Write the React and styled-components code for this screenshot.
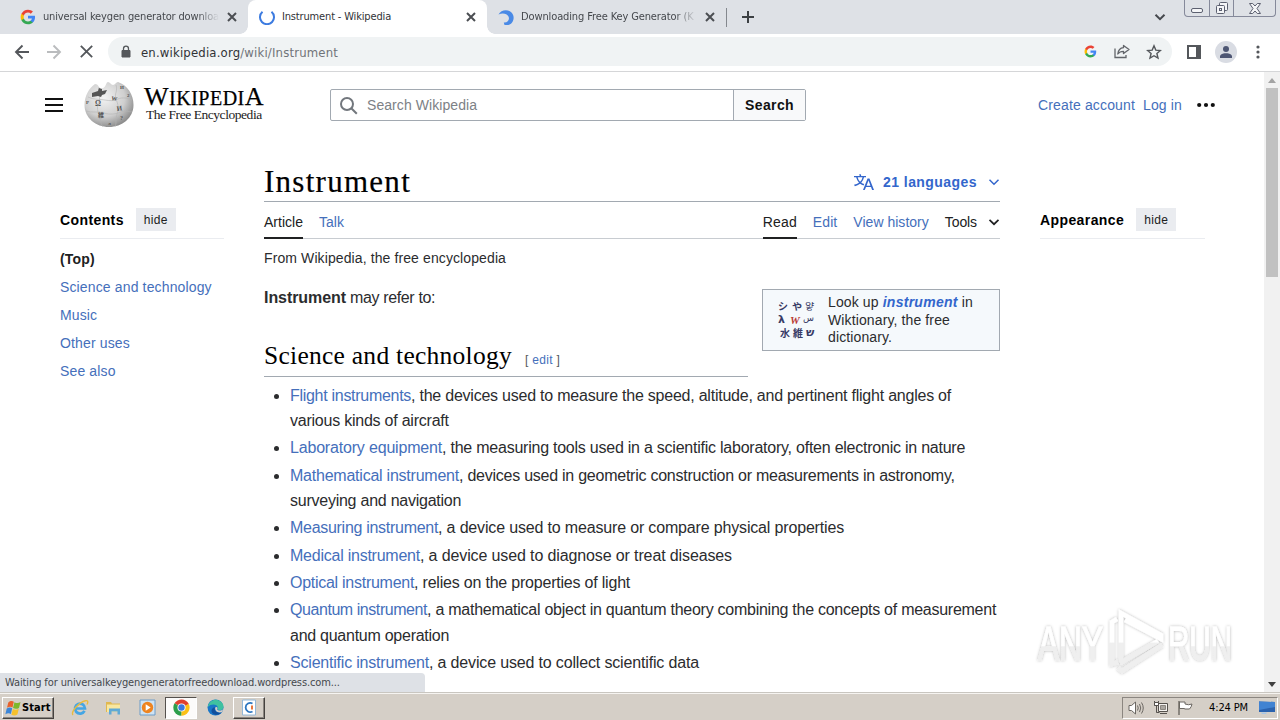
import React from 'react';
import styled, { createGlobalStyle, css } from 'styled-components';

const sans = "'Liberation Sans', Arial, sans-serif";
const serif = "'Liberation Serif', Georgia, serif";
const ui = "'DejaVu Sans Condensed', 'DejaVu Sans', Tahoma, sans-serif";

const GlobalStyle = createGlobalStyle`
  * {
    box-sizing: border-box;
  }
  body {
    margin: 0;
    background: #fff;
    overflow: hidden;
  }
  svg {
    display: block;
    flex: none;
  }
`;

const Desktop = styled.div`
  display: flex;
  flex-direction: column;
  width: 1280px;
  height: 720px;
  overflow: hidden;
  font-family: ${sans};
  color: #2b2c2e;
`;

/* browser chrome */

const TabStrip = styled.div`
  display: flex;
  align-items: center;
  height: 34px;
  background: #dee1e6;
`;

const Tab = styled.div`
  position: relative;
  display: flex;
  align-items: center;
  flex: none;
  width: ${({ $width }) => $width}px;
  height: 34px;
  padding-left: ${({ $pad }) => $pad}px;
  ${({ $active }) =>
    $active &&
    css`
      background: #fff;
      border-radius: 8px 8px 0 0;
      &::before,
      &::after {
        content: '';
        position: absolute;
        bottom: 0;
        width: 8px;
        height: 8px;
      }
      &::before {
        left: -8px;
        background: radial-gradient(circle at 0 0, transparent 7.5px, #fff 8px);
      }
      &::after {
        right: -8px;
        background: radial-gradient(circle at 100% 0, transparent 7.5px, #fff 8px);
      }
    `}
`;

const TabLabel = styled.span`
  flex: none;
  width: 176px;
  margin: 0 7px 0 ${({ $gap }) => $gap}px;
  overflow: hidden;
  white-space: pre;
  font: 11px/16px ${ui};
  letter-spacing: ${({ $ls }) => $ls}px;
  color: ${({ $active }) => ($active ? '#303236' : '#45484d')};
  ${({ $fade }) =>
    $fade && 'mask-image: linear-gradient(90deg, #000 154px, transparent 176px);'}
`;

const TabDivider = styled.div`
  width: 1px;
  height: 19px;
  background: #84888e;
`;

const NewTab = styled.div`
  margin-left: 15px;
`;

const TabSearch = styled.div`
  margin-left: auto;
  margin-right: 18px;
`;

const WindowButtons = styled.div`
  display: flex;
  align-self: flex-start;
  width: 92px;
  height: 17px;
  margin-right: 4px;
  border: 1px solid #85899a;
  border-top: 0;
  border-radius: 0 0 4px 4px;
`;

const WindowButton = styled.div`
  display: flex;
  justify-content: center;
  align-items: center;
  width: ${({ $width }) => $width}px;
  & + & {
    border-left: 1px solid #85899a;
  }
`;

const Toolbar = styled.div`
  display: flex;
  align-items: center;
  height: 38px;
  padding: 0 6px 2px;
  background: #fff;
  border-bottom: 1px solid #d5d6d8;
`;

const IconSlot = styled.div`
  display: flex;
  justify-content: center;
  align-items: center;
  width: 32px;
  height: 29px;
`;

const Omnibox = styled.div`
  display: flex;
  align-items: center;
  width: 1064px;
  height: 29px;
  margin: 0 6px;
  padding: 0 2px 0 12px;
  border-radius: 15px;
  background: #f0f3f4;
`;

const Url = styled.div`
  flex: 1;
  margin-left: 9px;
  padding-top: 2px;
  font: 13px/20px ${ui};
  letter-spacing: 0.17px;
  color: #707479;
  b {
    font-weight: 400;
    color: #303236;
  }
`;

const Avatar = styled.div`
  display: flex;
  justify-content: center;
  align-items: center;
  width: 22px;
  height: 22px;
  border-radius: 50%;
  background: #d9dce3;
`;

/* page */

const Viewport = styled.div`
  position: relative;
  display: flex;
  height: 620px;
  overflow: hidden;
`;

const Page = styled.div`
  width: 1264px;
  height: 620px;
  overflow: hidden;
`;

const Header = styled.header`
  display: flex;
  align-items: center;
  height: 66px;
  padding-left: 45px;
`;

const Burger = styled.div`
  width: 18px;
  height: 14px;
  margin-right: 21px;
  border-top: 2px solid #111;
  border-bottom: 2px solid #111;
  display: flex;
  align-items: center;
  &::after {
    content: '';
    width: 18px;
    height: 2px;
    background: #111;
  }
`;

const Wordmark = styled.div`
  width: 120px;
  height: 42px;
  margin: 0 66px 0 10px;
  color: #000;
  font-family: ${serif};
  white-space: nowrap;
`;

const Brand = styled.div`
  height: 22px;
  font-size: 26px;
  line-height: 25px;
  letter-spacing: 0.5px;
  -webkit-text-stroke: 0.25px #000;
  span {
    font-size: 20px;
  }
`;

const Motto = styled.div`
  margin-left: 2px;
  font-size: 13.5px;
  line-height: 18px;
  letter-spacing: -0.45px;
  color: #222;
`;

const SearchForm = styled.div`
  display: flex;
  width: 476px;
  height: 32px;
  border: 1px solid #a2a9b1;
  border-radius: 2px;
`;

const SearchField = styled.div`
  display: flex;
  align-items: center;
  gap: 8px;
  width: 403px;
  padding: 0 0 1px 8px;
  border-right: 1px solid #a2a9b1;
  font-size: 14px;
  letter-spacing: 0.07px;
  color: #7d8186;
`;

const SearchButton = styled.div`
  flex: 1;
  background: #f8f9fa;
  text-align: center;
  font: bold 14px/30px ${sans};
  letter-spacing: 0.38px;
  color: #111;
`;

const UserLinks = styled.div`
  display: flex;
  align-items: center;
  margin-left: 232px;
  font-size: 14px;
  letter-spacing: 0.145px;
  a + a {
    margin-left: 8px;
  }
  svg {
    margin-left: 15px;
  }
`;

const Link = styled.a`
  color: #456fbb;
  letter-spacing: ${({ $ls }) => ($ls === undefined ? 'inherit' : `${$ls}px`)};
`;

const Columns = styled.div`
  display: grid;
  grid-template-columns: 164px 736px 165px;
  column-gap: 40px;
  padding-left: 60px;
`;

const Sidebar = styled.aside`
  padding-top: 64px;
`;

const SidebarHead = styled.div`
  display: flex;
  align-items: center;
  gap: 12px;
  height: 37px;
  padding-bottom: 1px;
  border-bottom: 1px solid #eaecf0;
  font-weight: bold;
  font-size: 14px;
  letter-spacing: 0.4px;
  color: #000;
`;

const HideButton = styled.span`
  width: 40px;
  height: 23px;
  background: #eaecf0;
  text-align: center;
  font: 12px/24px ${sans};
  letter-spacing: 0.33px;
  color: #202122;
`;

const Toc = styled.div`
  padding-top: 6px;
  font-size: 14px;
  line-height: 28px;
`;

const TocItem = styled.div`
  font-weight: ${({ $top }) => ($top ? 'bold' : 'normal')};
  color: ${({ $top }) => ($top ? '#202122' : '#456fbb')};
  letter-spacing: ${({ $top }) => ($top ? 0.21 : 0.14)}px;
`;

const TitleRow = styled.div`
  display: flex;
  justify-content: space-between;
  align-items: center;
  height: 64px;
  padding-top: 24px;
  border-bottom: 1px solid #a2a9b1;
`;

const Title = styled.h1`
  margin: 0;
  font: 31px/36px ${serif};
  letter-spacing: 1.27px;
  color: #000;
  -webkit-text-stroke: 0.2px #000;
`;

const Languages = styled.div`
  display: flex;
  align-items: center;
  font-weight: bold;
  font-size: 14px;
  letter-spacing: 0.44px;
  color: #3366cc;
  span {
    margin: 0 11px 0 9px;
  }
`;

const PageTabs = styled.nav`
  display: flex;
  height: 37px;
  border-bottom: 1px solid #c8ccd1;
  font-size: 14px;
  line-height: 40px;
`;

const PageTab = styled.div`
  height: 37px;
  margin-right: ${({ $gap = 16 }) => $gap}px;
  letter-spacing: ${({ $ls = 0.05 }) => $ls}px;
  color: ${({ $plain }) => ($plain ? '#202122' : '#456fbb')};
  ${({ $selected }) => $selected && 'box-shadow: inset 0 -2px #202122;'}
`;

const Spacer = styled.div`
  flex: 1;
`;

const ToolsArrow = styled.div`
  display: flex;
  align-items: center;
  height: 40px;
`;

const Tagline = styled.div`
  padding-top: 9px;
  font-size: 14px;
  line-height: 20px;
  letter-spacing: 0.105px;
`;

const Article = styled.div`
  padding-top: 17px;
  font-size: 16px;
  line-height: 25.6px;
`;

const SisterBox = styled.div`
  float: right;
  display: flex;
  align-items: center;
  width: 238px;
  height: 62px;
  margin: 4px 0 8px 14px;
  padding-left: 13px;
  border: 1px solid #a2a9b1;
  background: #f5f9fc;
  font-size: 14px;
  line-height: 17.5px;
  letter-spacing: 0.12px;
  p {
    width: 160px;
    margin: 1px 0 0 10px;
  }
  i {
    font-weight: bold;
    letter-spacing: 0.27px;
    color: #3366cc;
  }
`;

const Lead = styled.p`
  margin: 0;
  letter-spacing: -0.37px;
  b {
    letter-spacing: -0.07px;
  }
`;

const SectionHead = styled.h2`
  display: flex;
  align-items: baseline;
  margin: 28px 0 0;
  height: 38px;
  border-bottom: 1px solid #a2a9b1;
  font: 25.5px/33px ${serif};
  letter-spacing: 0.265px;
  color: #000;
`;

const EditSection = styled.span`
  margin-left: 13px;
  font: 12px/20px ${sans};
  letter-spacing: 0.29px;
  color: #54595d;
`;

const List = styled.ul`
  margin: 6px 0 0;
  padding: 0 0 0 26px;
`;

const ListItem = styled.li`
  margin-bottom: 1.6px;
  letter-spacing: ${({ $ls }) => $ls}px;
`;

const Scrollbar = styled.div`
  display: flex;
  flex-direction: column;
  align-items: center;
  width: 16px;
  background: #f1f1f1;
`;

const Thumb = styled.div`
  width: 12px;
  height: 189px;
  margin-bottom: auto;
  background: #c1c1c1;
`;

const ArrowCell = styled.div`
  display: flex;
  align-items: center;
  justify-content: center;
  height: 16px;
`;

const StatusBubble = styled.div`
  position: absolute;
  left: 0;
  bottom: 0;
  width: 425px;
  height: 19px;
  padding-left: 5px;
  border-radius: 0 4px 0 0;
  background: #dee1e6;
  font: 11px/20px ${ui};
  letter-spacing: -0.11px;
  color: #45484d;
`;

const Watermark = styled.svg`
  position: absolute;
  left: 1030px;
  top: 528px;
  text {
    font: 49px 'Liberation Sans Narrow', ${sans};
  }
`;

/* taskbar */

const Taskbar = styled.div`
  display: flex;
  align-items: center;
  height: 28px;
  padding: 2px 2px 0;
  background: #d5cfc7;
  border-top: 1px solid #c9c6c0;
  box-shadow: inset 0 1px #f6f4f1;
`;

const raised = css`
  border: 1px solid;
  border-color: #fff #45423f #45423f #fff;
  box-shadow: inset -1px -1px #8b8680;
`;

const sunken = css`
  border: 1px solid;
  border-color: #55514d #fff #fff #55514d;
  background: #fcfbfa;
`;

const StartButton = styled.div`
  display: flex;
  align-items: center;
  gap: 1px;
  width: 52px;
  height: 22px;
  padding-left: 2px;
  margin-right: 10px;
  font: bold 11px/18px ${ui};
  letter-spacing: 0.1px;
  color: #000;
  ${raised}
`;

const TaskItem = styled.div`
  display: flex;
  justify-content: center;
  align-items: center;
  width: 32px;
  height: 22px;
  margin-right: 1.8px;
  ${({ $open }) => $open && raised}
  ${({ $current }) => $current && sunken}
`;

const Tray = styled.div`
  display: flex;
  align-items: center;
  gap: 8px;
  width: 156px;
  height: 22px;
  margin-left: auto;
  padding-left: 5px;
  border: 1px solid;
  border-color: #8b8680 #fff #fff #8b8680;
`;

const Clock = styled.span`
  margin: 0 3px 0 7px;
  font: 11px/20px ${ui};
  letter-spacing: -0.12px;
  color: #000;
  white-space: nowrap;
`;

/* drawings */

const GoogleIcon = ({ size }) => (
  <svg width={size} height={size} viewBox="0 0 24 24">
    <path fill="#4285f4" d="M22.56 12.25c0-.78-.07-1.53-.2-2.25H12v4.26h5.92c-.26 1.37-1.04 2.53-2.21 3.31v2.77h3.57c2.08-1.92 3.28-4.74 3.28-8.09z" />
    <path fill="#34a853" d="M12 23c2.97 0 5.46-.98 7.28-2.66l-3.57-2.77c-.98.66-2.23 1.06-3.71 1.06-2.86 0-5.29-1.93-6.16-4.53H2.18v2.84C3.99 20.53 7.7 23 12 23z" />
    <path fill="#fbbc05" d="M5.84 14.09c-.22-.66-.35-1.36-.35-2.09s.13-1.43.35-2.09V7.07H2.18C1.43 8.55 1 10.22 1 12s.43 3.45 1.18 4.93l3.66-2.84z" />
    <path fill="#ea4335" d="M12 5.38c1.62 0 3.06.56 4.21 1.64l3.15-3.15C17.45 2.09 14.97 1 12 1 7.7 1 3.99 3.47 2.18 7.07l3.66 2.84c.87-2.6 3.3-4.53 6.16-4.53z" />
  </svg>
);

const CloseIcon = ({ size = 12, color = '#4b4e52', width = 2 }) => (
  <svg width={size} height={size} viewBox="0 0 12 12">
    <path d="M2 2l8 8M10 2l-8 8" stroke={color} strokeWidth={width} fill="none" />
  </svg>
);

const Chevron = ({ size = 12, color = '#45484d', width = 2 }) => (
  <svg width={size} height={size} viewBox="0 0 12 12">
    <path d="M1.500 3.800L6 8.200l4.500-4.400" stroke={color} strokeWidth={width} fill="none" />
  </svg>
);

const ArrowIcon = ({ color, flip }) => (
  <svg width="16" height="16" viewBox="0 0 16 16">
    <path
      d="M15 8H2.500M8.500 1.500L2 8l6.500 6.500"
      transform={flip ? 'rotate(180 8 8)' : undefined}
      stroke={color}
      strokeWidth="1.9"
      fill="none"
    />
  </svg>
);

const Globe = () => (
  <svg width="50" height="50" viewBox="0 0 50 50">
    <defs>
      <radialGradient id="globe" cx="0.4" cy="0.35" r="0.7">
        <stop offset="0" stopColor="#f3f3f3" />
        <stop offset="0.6" stopColor="#cfcfcf" />
        <stop offset="1" stopColor="#858585" />
      </radialGradient>
    </defs>
    <path
      d="M11 4c-6 4-10.500 12-10.500 21C.5 38 12 47 25 47s24.500-9 24.500-22C49.500 14 43 5 34 2c-2 0-3 3-5 3s-3-3-5-3-2 5-5 6-3 1-4-1-2-3-4-3z"
      fill="url(#globe)"
    />
    <path
      d="M4 17c6 3 12 2 17 3s9 1 13-1 10-1 14 1M2 31c6 2 12 0 18 2s12 1 17-1 8 0 11 0M15 7c-2 6 2 9 0 14s-2 9 0 14 1 8 4 12M32 5c2 6-2 9 0 14s3 9 1 15 0 9-2 13"
      stroke="#b4b4b4"
      strokeWidth="0.600"
      fill="none"
    />
    <path d="M8 13l6-2 1-3 3 1 0 2 5-1-2 4-3 1-1 2-3-1-6 1z" fill="#555" />
    <g fill="#555" fontFamily="Liberation Serif, serif" fontWeight="bold">
      <text x="11" y="26" fontSize="7.500">Ω</text>
      <text x="27" y="20" fontSize="6" transform="rotate(10 27 20)">W</text>
      <text x="33" y="31" fontSize="7" transform="rotate(-8 33 31)">И</text>
      <text x="14" y="37" fontSize="6" fontFamily="Noto Sans CJK JP">維</text>
      <text x="2" y="24" fontSize="5">Р</text>
      <text x="43" y="17" fontSize="5">2</text>
      <text x="36" y="40" fontSize="6">?</text>
      <text x="24" y="45" fontSize="5">л</text>
      <text x="36" y="9" fontSize="5">И</text>
    </g>
  </svg>
);

const WiktionaryLogo = () => (
  <svg width="42" height="44" viewBox="0 0 42 44">
    <g
      fill="#383c66"
      fontFamily="Noto Sans CJK JP, Liberation Serif, DejaVu Sans, serif"
      fontSize="10"
      fontWeight="bold"
    >
      <text x="2" y="12">シ</text>
      <text x="16" y="12" transform="rotate(8 20 8)">や</text>
      <text x="29" y="12" fontFamily="Noto Sans CJK KR" fontWeight="400" transform="rotate(6 34 8)">얗</text>
      <text x="2" y="25" fontSize="11" fontFamily="DejaVu Sans">λ</text>
      <text x="14" y="26" fontSize="11" fill="#b93a34" fontFamily="Liberation Serif" fontStyle="italic">W</text>
      <text x="27" y="23" fontSize="9" fontFamily="DejaVu Sans" fontWeight="400">س</text>
      <text x="4" y="39">水</text>
      <text x="17" y="39">維</text>
      <text x="30" y="38" fontSize="11" fontFamily="DejaVu Sans">ש</text>
    </g>
  </svg>
);

const LanguageIcon = () => (
  <svg width="20" height="20" viewBox="0 0 20 20" fill="#3366cc">
    <path d="M20 18h-1.440a.6.6 0 0 1-.4-.12.8.8 0 0 1-.23-.31L17 15h-5l-1 2.540a.8.8 0 0 1-.22.3.6.6 0 0 1-.4.14H9l4.550-11.470h1.890zm-3.530-4.310L14.890 9.500a12 12 0 0 1-.39-1.240q-.09.37-.19.69l-.19.56-1.580 4.190zm-6.300-1.580a13.400 13.400 0 0 1-2.910-1.410 11.460 11.460 0 0 0 2.810-5.370H12V4H7.310a4 4 0 0 0-.2-.56C6.870 2.790 6.600 2 6.600 2l-1.470.5s.4.89.6 1.500H0v1.330h2.150A11.230 11.230 0 0 0 5 10.700a17.200 17.200 0 0 1-5 2.100q.56.82.87 1.380a23.300 23.300 0 0 0 5.220-2.510 15.600 15.600 0 0 0 3.560 1.770zM3.630 5.330h4.910a8.100 8.100 0 0 1-2.450 4.450 9.100 9.100 0 0 1-2.460-4.450" />
  </svg>
);

const ChromeLogo = () => (
  <svg width="17" height="17" viewBox="0 0 18 18">
    <path d="M9 9L1.600 4.500A8.700 8.700 0 0 1 16.600 5z" fill="#e0402f" />
    <path d="M9 9l7.600-4A8.700 8.700 0 0 1 8.700 17.700z" fill="#fbc116" />
    <path d="M9 9l-.3 8.700A8.700 8.700 0 0 1 1.600 4.500z" fill="#2c9e4b" />
    <path d="M9 5h7.600L9 9z" fill="#e0402f" />
    <circle cx="9" cy="9" r="4.300" fill="#fff" />
    <circle cx="9" cy="9" r="3.400" fill="#3a78e0" />
  </svg>
);

const WindowsFlag = () => (
  <svg width="16" height="16" viewBox="0 0 16 16">
    <path d="M3.300 2.500c2-1.800 4-1.800 5.500-.8L7.500 7.500c-1.500-1-3.500-1-5.500.3z" fill="#e8622c" />
    <path d="M9.500 2.200c2 1.200 4 1.200 6-.2L14 7.900c-2 1.200-4 1.200-6 .2z" fill="#7db82c" />
    <path d="M1.700 8.600c2-1.300 4-1.300 5.500-.3L5.900 14c-1.500-1-3.500-1-5.500.3z" fill="#3c86d8" />
    <path d="M7.800 8.900c2 1 4 1 6-.2L12.400 14.500c-2 1.200-4 1.200-6 .2z" fill="#f6c12c" />
  </svg>
);

const IeIcon = () => (
  <svg width="18" height="18" viewBox="0 0 18 18">
    <path d="M13.500 11.800A5 5 0 1 1 14 9.500H5" stroke="#45a6e4" strokeWidth="2.700" fill="none" />
    <path d="M2 16C-.5 13 8 3 14.500 1.700c3-.5 2.500 2 1.500 3.800" stroke="#e8bb3f" strokeWidth="1.400" fill="none" />
  </svg>
);

const FolderIcon = () => (
  <svg width="17" height="17" viewBox="0 0 17 17">
    <path d="M1 3h5l1 1.500h8V13H1z" fill="#e0b850" />
    <path d="M2 5.500h13V13H2z" fill="#f8e7a0" />
    <path d="M4 15.500V9.500h11v6h-2.500v-3h-6v3z" fill="#5fa9d6" />
  </svg>
);

const MediaIcon = () => (
  <svg width="17" height="17" viewBox="0 0 17 17">
    <path d="M1 1h15v15H1z" fill="#cfe3f3" stroke="#6c9cc8" />
    <circle cx="8.500" cy="8.500" r="5.700" fill="#ee8420" />
    <path d="M6.700 5.300l5 3.200-5 3.200z" fill="#fff" />
  </svg>
);

const EdgeIcon = () => (
  <svg width="17" height="17" viewBox="0 0 17 17">
    <circle cx="8.500" cy="8.500" r="8" fill="#1976c8" />
    <path d="M.7 8C2 2 7 0 10.500 1s6 3.500 6 6.500-2.500 4-4.500 3.500c-2-.4-1-1.600-1.200-2.800C10.500 5 4 4 .7 8z" fill="#3fc1a0" />
    <path d="M7.800 8c-1 4 2.500 6.500 6.700 5.300-2 3-6.500 3.200-8.700 1.200C3.500 12.300 4.500 9 7.800 8z" fill="#124f9c" />
    <path d="M8.200 8.500c1-.9 2.200-.6 2.300.4 0 1-.8 1.300.2 2.100 1.600 1 4 .6 5.500-.8l-1 2.800c-4 1.500-7.500-.8-7-4.500z" fill="#d5cfc7" />
  </svg>
);

const CIcon = () => (
  <svg width="16" height="17" viewBox="0 0 16 17">
    <path d="M1.500 1h13v15h-13z" fill="#fff" stroke="#93b8d8" />
    <path d="M11.500 4.500A4.600 4.600 0 1 0 11.500 12.500" stroke="#2c76c0" strokeWidth="1.800" fill="none" />
    <path d="M10 6.500h2v4h-2z" fill="#e8743a" />
  </svg>
);

const VolumeIcon = () => (
  <svg width="17" height="16" viewBox="0 0 17 16" stroke="#6b6762" fill="none">
    <path d="M1 5.500h2.500L7.500 2v12l-4-3.500H1z" fill="#fff" />
    <path d="M9.500 5.500q1.500 2.500 0 5M11.500 4q2.500 4 0 8M13.500 2.500q3.500 5.500 0 11" />
  </svg>
);

const NetworkIcon = () => (
  <svg width="16" height="16" viewBox="0 0 16 16" stroke="#55514d">
    <path d="M5.500 3.500h9v8h-9z" fill="#f4f2ef" />
    <path d="M7.500 5.500h5v4h-5z" fill="#aaa6a0" stroke="#8b8680" />
    <path d="M7 13.500h7M1.500 1v4.500h4V1M3.500 5.500v7h3" fill="none" />
    <path d="M1.500 2.500h4v3h-4z" fill="#fff" />
  </svg>
);

const FlagIcon = () => (
  <svg width="17" height="16" viewBox="0 0 17 16" stroke="#6b6762">
    <path d="M2.500 2h5.500v2q3.500 1.500 7 0-.5 3-2.500 5h-5V8.500h-5z" fill="#fff" />
    <path d="M2 1v14" fill="none" strokeWidth="1.400" />
  </svg>
);

const MonitorIcon = () => (
  <svg width="16" height="15" viewBox="0 0 16 15">
    <path d="M0 1.500l16 .5v10H0z" fill="#2b62ae" />
    <path d="M0 1.500l16 .5v5L0 10z" fill="#4183d2" />
    <path d="M2 12.500h6l-1 1.500H3z" fill="#a8c6e6" />
  </svg>
);

const AnyRun = () => (
  <Watermark width="210" height="84" viewBox="0 0 210 84">
    <defs>
      <linearGradient id="half" x1="0" y1="0" x2="0" y2="1">
        <stop offset="0.55" stopColor="#fff" />
        <stop offset="0.57" stopColor="#efefef" />
      </linearGradient>
      <linearGradient id="halfPlay" gradientUnits="userSpaceOnUse" x1="0" y1="10" x2="0" y2="74">
        <stop offset="0.5" stopColor="#fff" />
        <stop offset="0.52" stopColor="#efefef" />
      </linearGradient>
      <filter id="shade" x="-10%" y="-20%" width="120%" height="140%">
        <feDropShadow dx="0" dy="0" stdDeviation="1.800" floodColor="#000" floodOpacity="0.3" />
      </filter>
    </defs>
    <g filter="url(#shade)" fill="url(#half)" stroke="url(#half)" strokeWidth="1">
      <text x="8" y="60" textLength="65" lengthAdjust="spacingAndGlyphs">ANY</text>
      <text x="138" y="60" textLength="64" lengthAdjust="spacingAndGlyphs">RUN</text>
    </g>
    <g filter="url(#shade)" fill="none" stroke="url(#halfPlay)" strokeWidth="4.500">
      <path d="M87 19l-5 3v42l6-2" />
      <path d="M91 62V13l40 22v4L95 20" />
      <path d="M90 63l38-22M88 68l4 3 40-26" />
    </g>
  </Watermark>
);

const toc = ['Science and technology', 'Music', 'Other uses', 'See also'];

const instruments = [
  { name: 'Flight instruments', ls: -0.29, textLs: -0.23, text: ', the devices used to measure the speed, altitude, and pertinent flight angles of various kinds of aircraft' },
  { name: 'Laboratory equipment', ls: -0.18, textLs: -0.237, text: ', the measuring tools used in a scientific laboratory, often electronic in nature' },
  { name: 'Mathematical instrument', ls: -0.23, textLs: -0.245, text: ', devices used in geometric construction or measurements in astronomy, surveying and navigation' },
  { name: 'Measuring instrument', ls: -0.29, textLs: -0.164, text: ', a device used to measure or compare physical properties' },
  { name: 'Medical instrument', ls: -0.24, textLs: -0.123, text: ', a device used to diagnose or treat diseases' },
  { name: 'Optical instrument', ls: -0.27, textLs: -0.207, text: ', relies on the properties of light' },
  { name: 'Quantum instrument', ls: -0.44, textLs: -0.261, text: ', a mathematical object in quantum theory combining the concepts of measurement and quantum operation' },
  { name: 'Scientific instrument', ls: -0.2, textLs: -0.157, text: ', a device used to collect scientific data' },
];

const BrowserTabs = () => (
  <TabStrip>
    <Tab $width={248} $pad={20}>
      <GoogleIcon size={16} />
      <TabLabel $gap={7} $ls={-0.15} $fade>universal keygen generator downloa</TabLabel>
      <CloseIcon />
    </Tab>
    <Tab $width={239} $pad={11} $active>
      <svg width="16" height="16" viewBox="0 0 16 16">
        <path d="M3.500 2.800A7 7 0 1 0 12.500 2.800" stroke="#3c7be0" strokeWidth="2" fill="none" />
      </svg>
      <TabLabel $gap={7} $ls={-0.16} $active>Instrument - Wikipedia</TabLabel>
      <CloseIcon />
    </Tab>
    <Tab $width={239} $pad={11}>
      <svg width="17" height="17" viewBox="0 0 17 17">
        <path d="M.5 5.500C3 .5 10 0 13.500 3.500c4 4 2 11-3 12.500H6.500l-.7-2.500C9.500 14 12 11 10.500 7.500 9 4.500 4.500 3.500.5 5.500z" fill="#4a8ae6" />
      </svg>
      <TabLabel $gap={6} $ls={-0.12} $fade>Downloading Free Key Generator (K</TabLabel>
      <CloseIcon />
    </Tab>
    <TabDivider />
    <NewTab>
      <svg width="12" height="12" viewBox="0 0 12 12">
        <path d="M6 0v12M0 6h12" stroke="#3c4043" strokeWidth="2" />
      </svg>
    </NewTab>
    <TabSearch>
      <Chevron size={12} />
    </TabSearch>
    <WindowButtons>
      <WindowButton $width={24}>
        <svg width="12" height="16" viewBox="0 0 12 16">
          <rect x="0.500" y="8.500" width="11" height="4" rx="1.500" fill="#f4f5f7" stroke="#5c6070" />
        </svg>
      </WindowButton>
      <WindowButton $width={25}>
        <svg width="14" height="15" viewBox="0 0 14 15" fill="#f4f5f7" stroke="#5c6070">
          <rect x="4.500" y="1.500" width="8" height="8" rx="1" />
          <rect x="1.500" y="4.500" width="8" height="8" rx="1" />
          <rect x="4.500" y="7.500" width="2" height="2" />
        </svg>
      </WindowButton>
      <WindowButton $width={42}>
        <svg width="12" height="11" viewBox="0 0 12 11">
          <path d="M.5.5h3.200L6 3 8.300.5h3.200L8 5.500l3.500 5H8.300L6 8l-2.300 2.500H.5L4 5.500z" fill="#f4f5f7" stroke="#5c6070" />
        </svg>
      </WindowButton>
    </WindowButtons>
  </TabStrip>
);

const BrowserToolbar = () => (
  <Toolbar>
    <IconSlot><ArrowIcon color="#54575b" /></IconSlot>
    <IconSlot><ArrowIcon color="#babcbe" flip /></IconSlot>
    <IconSlot><CloseIcon size={17} color="#54575b" width={1.3} /></IconSlot>
    <Omnibox>
      <svg width="12" height="14" viewBox="0 0 12 14">
        <path d="M2 5.500h8v6.500h-8z" fill="#54575b" stroke="#54575b" strokeLinejoin="round" />
        <path d="M3.500 6V3.700a2.500 2.500 0 0 1 5 0V6" stroke="#54575b" strokeWidth="1.300" fill="none" />
      </svg>
      <Url><b>en.wikipedia.org</b>/wiki/Instrument</Url>
      <IconSlot><GoogleIcon size={13} /></IconSlot>
      <IconSlot>
        <svg width="16" height="15" viewBox="0 0 16 15" stroke="#62656a" strokeWidth="1.300" fill="none">
          <path d="M1 4.500V13.500h11V11" />
          <path d="M9.500 1.500l5.500 4-5.500 4V7.300C6.500 7.300 5 8.300 3.800 10c.4-3.500 2.400-6 5.700-6.300z" strokeLinejoin="round" />
        </svg>
      </IconSlot>
      <IconSlot>
        <svg width="16" height="16" viewBox="0 0 16 16">
          <path d="M8 1.800l1.800 4.300 4.600.4-3.500 3 1.100 4.600L8 11.700l-4 2.400 1.100-4.600-3.500-3 4.600-.4z" stroke="#54575b" strokeWidth="1.400" fill="none" />
        </svg>
      </IconSlot>
    </Omnibox>
    <IconSlot>
      <svg width="14" height="14" viewBox="0 0 14 14">
        <path d="M1 1h12v12H1z" stroke="#54575b" strokeWidth="2" fill="none" />
        <path d="M9 1h4v12H9z" fill="#54575b" />
      </svg>
    </IconSlot>
    <IconSlot>
      <Avatar>
        <svg width="12" height="12" viewBox="0 0 12 12" fill="#4d5673">
          <circle cx="6" cy="3" r="3" />
          <path d="M0 12V9.800C1 7.800 4 7.300 6 7.300s5 .5 6 2.500V12z" />
        </svg>
      </Avatar>
    </IconSlot>
    <IconSlot>
      <svg width="4" height="14" viewBox="0 0 4 14" fill="#54575b">
        <circle cx="2" cy="2" r="1.600" />
        <circle cx="2" cy="7" r="1.600" />
        <circle cx="2" cy="12" r="1.600" />
      </svg>
    </IconSlot>
  </Toolbar>
);

const WikiHeader = () => (
  <Header>
    <Burger />
    <Globe />
    <Wordmark>
      <Brand>W<span>IKIPEDI</span>A</Brand>
      <Motto>The Free Encyclopedia</Motto>
    </Wordmark>
    <SearchForm>
      <SearchField>
        <svg width="20" height="20" viewBox="0 0 20 20" stroke="#72777d" strokeWidth="2" fill="none">
          <circle cx="8" cy="9" r="6" />
          <path d="M12.300 13.300l5.500 5.500" />
        </svg>
        Search Wikipedia
      </SearchField>
      <SearchButton>Search</SearchButton>
    </SearchForm>
    <UserLinks>
      <Link>Create account</Link>
      <Link>Log in</Link>
      <svg width="18" height="6" viewBox="0 0 18 6" fill="#111">
        <circle cx="2.200" cy="3" r="2.100" />
        <circle cx="9" cy="3" r="2.100" />
        <circle cx="15.800" cy="3" r="2.100" />
      </svg>
    </UserLinks>
  </Header>
);

const ArticleColumn = () => (
  <main>
    <TitleRow>
      <Title>Instrument</Title>
      <Languages>
        <LanguageIcon />
        <span>21 languages</span>
        <Chevron color="#3366cc" width={1.5} />
      </Languages>
    </TitleRow>
    <PageTabs>
      <PageTab $plain $selected $ls={0.01}>Article</PageTab>
      <PageTab $ls={0.02}>Talk</PageTab>
      <Spacer />
      <PageTab $plain $selected $ls={0.13}>Read</PageTab>
      <PageTab $ls={0.09}>Edit</PageTab>
      <PageTab $ls={0.02}>View history</PageTab>
      <PageTab $plain $gap={11} $ls={-0.1}>Tools</PageTab>
      <ToolsArrow>
        <Chevron color="#202122" width={1.7} />
      </ToolsArrow>
    </PageTabs>
    <Tagline>From Wikipedia, the free encyclopedia</Tagline>
    <Article>
      <SisterBox>
        <WiktionaryLogo />
        <p>
          Look up <i>instrument</i> in Wiktionary, the free dictionary.
        </p>
      </SisterBox>
      <Lead>
        <b>Instrument</b> may refer to:
      </Lead>
      <SectionHead>
        Science and technology
        <EditSection>
          [ <Link>edit</Link> ]
        </EditSection>
      </SectionHead>
      <List>
        {instruments.map(({ name, ls, text, textLs }) => (
          <ListItem key={name} $ls={textLs}>
            <Link $ls={ls}>{name}</Link>
            {text}
          </ListItem>
        ))}
      </List>
    </Article>
  </main>
);

const TaskbarRow = () => (
  <Taskbar>
    <StartButton>
      <WindowsFlag />
      Start
    </StartButton>
    <TaskItem><IeIcon /></TaskItem>
    <TaskItem><FolderIcon /></TaskItem>
    <TaskItem><MediaIcon /></TaskItem>
    <TaskItem $current><ChromeLogo /></TaskItem>
    <TaskItem><EdgeIcon /></TaskItem>
    <TaskItem $open><CIcon /></TaskItem>
    <Tray>
      <VolumeIcon />
      <NetworkIcon />
      <FlagIcon />
      <Clock>4:24 PM</Clock>
      <MonitorIcon />
    </Tray>
  </Taskbar>
);

export default function App() {
  return (
    <Desktop>
      <GlobalStyle />
      <BrowserTabs />
      <BrowserToolbar />
      <Viewport>
        <Page>
          <WikiHeader />
          <Columns>
            <Sidebar>
              <SidebarHead>
                Contents <HideButton>hide</HideButton>
              </SidebarHead>
              <Toc>
                <TocItem $top>(Top)</TocItem>
                {toc.map((item) => (
                  <TocItem key={item}>{item}</TocItem>
                ))}
              </Toc>
            </Sidebar>
            <ArticleColumn />
            <Sidebar>
              <SidebarHead>
                Appearance <HideButton>hide</HideButton>
              </SidebarHead>
            </Sidebar>
          </Columns>
        </Page>
        <Scrollbar>
          <ArrowCell>
            <svg width="8" height="5" viewBox="0 0 8 5"><path d="M0 5l4-5 4 5z" fill="#a3a3a3" /></svg>
          </ArrowCell>
          <Thumb />
          <ArrowCell>
            <svg width="8" height="5" viewBox="0 0 8 5"><path d="M0 0l4 5 4-5z" fill="#404040" /></svg>
          </ArrowCell>
        </Scrollbar>
        <StatusBubble>
          Waiting for universalkeygengeneratorfreedownload.wordpress.com...
        </StatusBubble>
        <AnyRun />
      </Viewport>
      <TaskbarRow />
    </Desktop>
  );
}
